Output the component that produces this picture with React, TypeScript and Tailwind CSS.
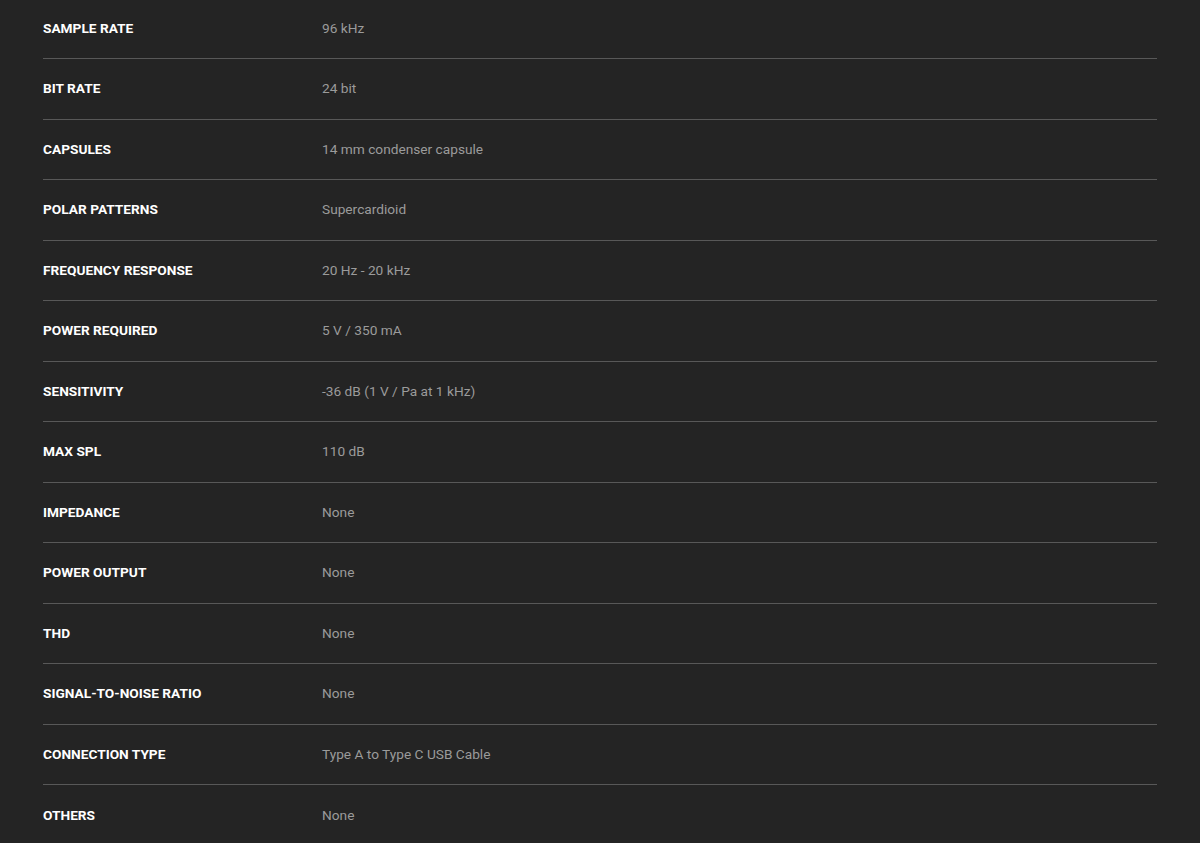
import React from "react";

const rows: [string, string][] = [
  ["SAMPLE RATE", "96 kHz"],
  ["BIT RATE", "24 bit"],
  ["CAPSULES", "14 mm condenser capsule"],
  ["POLAR PATTERNS", "Supercardioid"],
  ["FREQUENCY RESPONSE", "20 Hz - 20 kHz"],
  ["POWER REQUIRED", "5 V / 350 mA"],
  ["SENSITIVITY", "-36 dB (1 V / Pa at 1 kHz)"],
  ["MAX SPL", "110 dB"],
  ["IMPEDANCE", "None"],
  ["POWER OUTPUT", "None"],
  ["THD", "None"],
  ["SIGNAL-TO-NOISE RATIO", "None"],
  ["CONNECTION TYPE", "Type A to Type C USB Cable"],
  ["OTHERS", "None"],
];

export default function App() {
  return (
    <div
      className="w-full h-[843px] overflow-hidden bg-[#242424]"
      style={{ fontFamily: "Roboto, 'Liberation Sans', sans-serif" }}
    >
      <div className="mx-[43px] -mt-[1.5px]">
        {rows.map(([k, v], i) => (
          <div
            key={k}
            className={`flex items-center h-[60.5px] ${
              i < rows.length - 1 ? "border-b border-[#585858]" : ""
            }`}
          >
            <div className="w-[279px] text-[13.7px] font-bold text-white">
              {k}
            </div>
            <div className="text-[13.7px] text-[#9b9b9b]">{v}</div>
          </div>
        ))}
      </div>
    </div>
  );
}
